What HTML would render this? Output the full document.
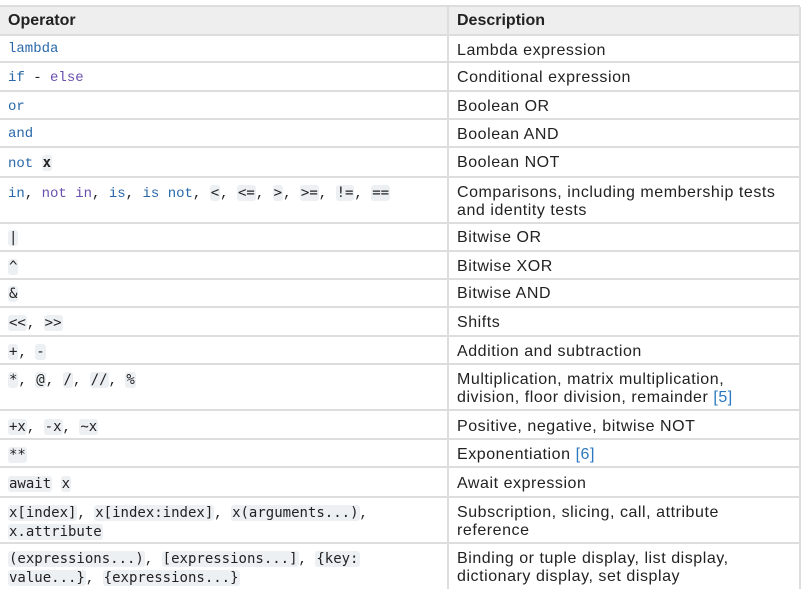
<!DOCTYPE html>
<html><head><meta charset="utf-8"><style>
body{margin:0;width:804px;height:589px;background:#fff;position:relative;overflow:hidden;font-family:"Liberation Sans",sans-serif;color:#222;}
.h{position:absolute;left:0;top:7px;width:800px;height:28px;background:#eeeeee;}
.ln{position:absolute;left:0;width:800px;height:2px;background:#dddddd;}
.vl{position:absolute;left:447px;top:7px;width:2px;height:582px;background:#dddddd;}
.rl{position:absolute;left:799px;top:7px;width:2px;height:582px;background:#dddddd;}
.c{position:absolute;left:8px;font-family:"Liberation Mono",monospace;font-size:14px;line-height:18px;white-space:pre;}
.d{position:absolute;left:457px;font-size:16px;letter-spacing:0.55px;line-height:18px;white-space:pre;}
.th{position:absolute;font-weight:bold;font-size:16px;top:12px;}
code{background:#ecf0f3;border-radius:3px;padding:0 1px;}
.b{color:#2a68aa;}.p{color:#6a4faf;}
a{color:#2a78c0;text-decoration:none;}
</style></head><body>
<div class="h"></div>
<div class="ln" style="top:5px"></div>
<div class="th" style="left:8px">Operator</div>
<div class="th" style="left:457px">Description</div>
<div class="ln" style="top:34px"></div>
<div class="ln" style="top:61px"></div>
<div class="ln" style="top:90px"></div>
<div class="ln" style="top:118px"></div>
<div class="ln" style="top:146px"></div>
<div class="ln" style="top:176px"></div>
<div class="ln" style="top:222px"></div>
<div class="ln" style="top:250px"></div>
<div class="ln" style="top:278px"></div>
<div class="ln" style="top:306px"></div>
<div class="ln" style="top:335px"></div>
<div class="ln" style="top:363px"></div>
<div class="ln" style="top:409px"></div>
<div class="ln" style="top:438px"></div>
<div class="ln" style="top:466px"></div>
<div class="ln" style="top:496px"></div>
<div class="ln" style="top:542px"></div>
<div class="vl"></div><div class="rl"></div>

<div class="c b" style="top:40px">lambda</div><div class="d" style="top:42px">Lambda expression</div>
<div class="c" style="top:69px"><span class="b">if</span> - <span class="p">else</span></div><div class="d" style="top:69px">Conditional expression</div>
<div class="c b" style="top:98px">or</div><div class="d" style="top:98px">Boolean OR</div>
<div class="c b" style="top:125px">and</div><div class="d" style="top:126px">Boolean AND</div>
<div class="c" style="top:154px"><span class="b">not</span> <code><b>x</b></code></div><div class="d" style="top:154px">Boolean NOT</div>
<div class="c" style="top:184px"><span class="b">in</span>, <span class="p">not in</span>, <span class="b">is</span>, <span class="b">is not</span>, <code>&lt;</code>, <code>&lt;=</code>, <code>&gt;</code>, <code>&gt;=</code>, <code>!=</code>, <code>==</code></div><div class="d" style="top:184px">Comparisons, including membership tests
and identity tests</div>
<div class="c" style="top:229px"><code>|</code></div><div class="d" style="top:229px">Bitwise OR</div>
<div class="c" style="top:258px"><code>^</code></div><div class="d" style="top:258px">Bitwise XOR</div>
<div class="c" style="top:285px"><code>&amp;</code></div><div class="d" style="top:285px">Bitwise AND</div>
<div class="c" style="top:314px"><code>&lt;&lt;</code>, <code>&gt;&gt;</code></div><div class="d" style="top:314px">Shifts</div>
<div class="c" style="top:343px"><code>+</code>, <code>-</code></div><div class="d" style="top:343px">Addition and subtraction</div>
<div class="c" style="top:371px"><code>*</code>, <code>@</code>, <code>/</code>, <code>//</code>, <code>%</code></div><div class="d" style="top:371px">Multiplication, matrix multiplication,
division, floor division, remainder <a>[5]</a></div>
<div class="c" style="top:418px"><code>+x</code>, <code>-x</code>, <code>~x</code></div><div class="d" style="top:418px">Positive, negative, bitwise NOT</div>
<div class="c" style="top:446px"><code>**</code></div><div class="d" style="top:446px">Exponentiation <a>[6]</a></div>
<div class="c" style="top:475px"><code>await</code> <code>x</code></div><div class="d" style="top:475px">Await expression</div>
<div class="c" style="top:504px"><code>x[index]</code>, <code>x[index:index]</code>, <code>x(arguments...)</code>,
<code>x.attribute</code></div><div class="d" style="top:504px">Subscription, slicing, call, attribute
reference</div>
<div class="c" style="top:550px"><code>(expressions...)</code>, <code>[expressions...]</code>, <code>{key:</code>
<code>value...}</code>, <code>{expressions...}</code></div><div class="d" style="top:550px">Binding or tuple display, list display,
dictionary display, set display</div>
</body></html>
